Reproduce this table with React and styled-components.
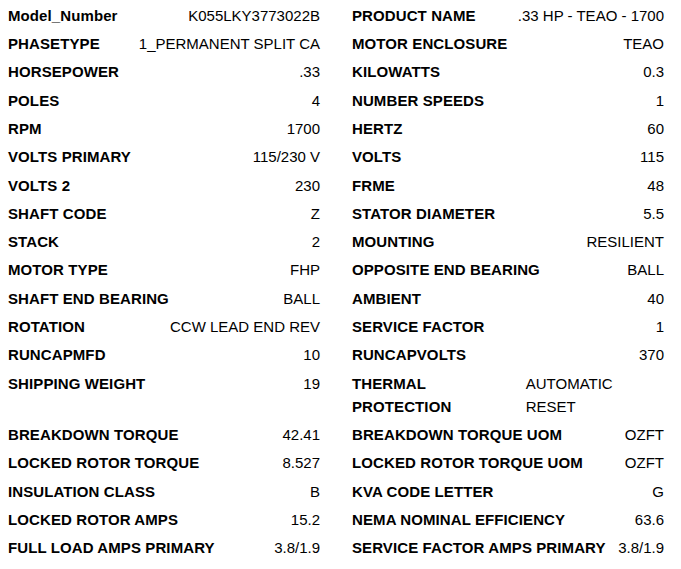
import styled, { createGlobalStyle } from "styled-components";

const GlobalStyle = createGlobalStyle`
  html, body {
    margin: 0;
    padding: 0;
    background: #ffffff;
  }
  body {
    font-family: "Liberation Sans", Arial, sans-serif;
    color: #000;
  }
`;

const SpecSheet = styled.div`
  display: grid;
  grid-template-columns: 312px 312px;
  column-gap: 32px;
  padding: 1px 0 0 8px;
  font-size: 15px;
  line-height: 23px;
`;

const SpecRow = styled.div`
  display: flex;
  justify-content: space-between;
  align-items: flex-start;
  padding: 2.67px 0;
`;

const Label = styled.span`
  font-weight: bold;
  letter-spacing: 0.1px;
`;

const Value = styled.span`
  text-align: left;
`;

const rows = [
  ["Model_Number", "K055LKY3773022B", "PRODUCT NAME", ".33 HP - TEAO - 1700"],
  ["PHASETYPE", "1_PERMANENT SPLIT CA", "MOTOR ENCLOSURE", "TEAO"],
  ["HORSEPOWER", ".33", "KILOWATTS", "0.3"],
  ["POLES", "4", "NUMBER SPEEDS", "1"],
  ["RPM", "1700", "HERTZ", "60"],
  ["VOLTS PRIMARY", "115/230 V", "VOLTS", "115"],
  ["VOLTS 2", "230", "FRME", "48"],
  ["SHAFT CODE", "Z", "STATOR DIAMETER", "5.5"],
  ["STACK", "2", "MOUNTING", "RESILIENT"],
  ["MOTOR TYPE", "FHP", "OPPOSITE END BEARING", "BALL"],
  ["SHAFT END BEARING", "BALL", "AMBIENT", "40"],
  ["ROTATION", "CCW LEAD END REV", "SERVICE FACTOR", "1"],
  ["RUNCAPMFD", "10", "RUNCAPVOLTS", "370"],
  ["SHIPPING WEIGHT", "19", "THERMAL PROTECTION", "AUTOMATIC RESET"],
  ["BREAKDOWN TORQUE", "42.41", "BREAKDOWN TORQUE UOM", "OZFT"],
  ["LOCKED ROTOR TORQUE", "8.527", "LOCKED ROTOR TORQUE UOM", "OZFT"],
  ["INSULATION CLASS", "B", "KVA CODE LETTER", "G"],
  ["LOCKED ROTOR AMPS", "15.2", "NEMA NOMINAL EFFICIENCY", "63.6"],
  ["FULL LOAD AMPS PRIMARY", "3.8/1.9", "SERVICE FACTOR AMPS PRIMARY", "3.8/1.9"],
];

const App = () => {
  return (
    <>
      <GlobalStyle />
      <SpecSheet>
        {rows.map(([l1, v1, l2, v2]) => [
          <SpecRow key={l1}>
            <Label>{l1}</Label>
            <Value>{v1}</Value>
          </SpecRow>,
          <SpecRow key={l2}>
            <Label>{l2}</Label>
            <Value>{v2}</Value>
          </SpecRow>,
        ])}
      </SpecSheet>
    </>
  );
};

export default App;
